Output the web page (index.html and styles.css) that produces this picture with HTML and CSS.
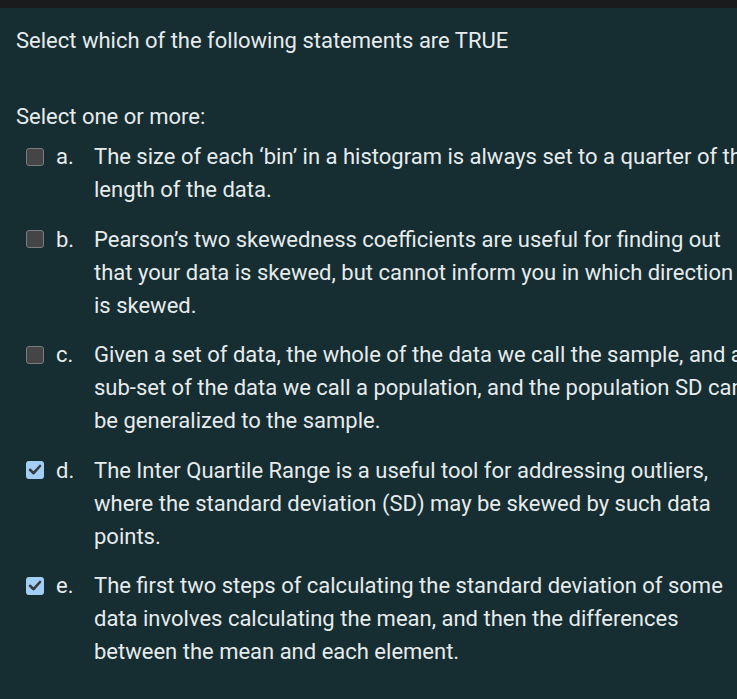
FILE: index.html
```html
<!DOCTYPE html>
<html>
<head>
<meta charset="utf-8">
<link rel="stylesheet" href="styles.css">
</head>
<body>
<div class="topbar"></div>
<div class="question">
  <div class="qtext">Select which of the following statements are TRUE</div>
  <div class="prompt">Select one or more:</div>
  <div class="answers">
    <div class="answer">
      <span class="box"></span><span class="letter">a.</span>
      <div class="text">The size of each ‘bin’ in a histogram is always set to a quarter of the length of the data.</div>
    </div>
    <div class="answer">
      <span class="box"></span><span class="letter">b.</span>
      <div class="text">Pearson’s two skewedness coefficients are useful for finding out that your data is skewed, but cannot inform you in which direction it is skewed.</div>
    </div>
    <div class="answer">
      <span class="box"></span><span class="letter">c.</span>
      <div class="text">Given a set of data, the whole of the data we call the sample, and a sub-set of the data we call a population, and the population SD can be generalized to the sample.</div>
    </div>
    <div class="answer">
      <span class="box checked"><svg viewBox="0 0 18 18" width="18" height="18"><path d="M4 8.8 L7.6 12.2 L14 5" fill="none" stroke="#383b3e" stroke-width="2.6" stroke-linecap="round" stroke-linejoin="round"/></svg></span><span class="letter">d.</span>
      <div class="text">The Inter Quartile Range is a useful tool for addressing outliers, where the standard deviation (SD) may be skewed by such data points.</div>
    </div>
    <div class="answer">
      <span class="box checked"><svg viewBox="0 0 18 18" width="18" height="18"><path d="M4 8.8 L7.6 12.2 L14 5" fill="none" stroke="#383b3e" stroke-width="2.6" stroke-linecap="round" stroke-linejoin="round"/></svg></span><span class="letter">e.</span>
      <div class="text">The first two steps of calculating the standard deviation of some data involves calculating the mean, and then the differences between the mean and each element.</div>
    </div>
  </div>
</div>
</body>
</html>
```

FILE: styles.css
```css
html, body {
  margin: 0;
  padding: 0;
  background: #162d32;
  overflow: hidden;
}
body {
  font-family: Roboto, "Liberation Sans", sans-serif;
  font-size: 22px;
  line-height: 33px;
  color: #e6ebec;
  width: 737px;
  height: 699px;
}
.topbar {
  height: 8px;
  background: #1a1b1d;
}
.question {
  padding: 16px 0 0 16px;
  width: 800px;
}
.qtext {
  margin-bottom: 43px;
}
.prompt {
  margin-bottom: 7px;
}
.answers {
  display: flex;
  flex-direction: column;
  gap: 16.5px;
}
.answer {
  display: flex;
  align-items: flex-start;
}
.box {
  flex: none;
  width: 18px;
  height: 18px;
  box-sizing: border-box;
  margin: 7.5px 0 0 10px;
  border: 1.5px solid #7a7e80;
  border-radius: 3px;
  background: #434547;
  display: flex;
}
.box.checked {
  border: none;
  background: #a3cff6;
}
.letter {
  flex: none;
  width: 38px;
  margin-left: 12px;
}
.text {
  width: 668px;
}
```
